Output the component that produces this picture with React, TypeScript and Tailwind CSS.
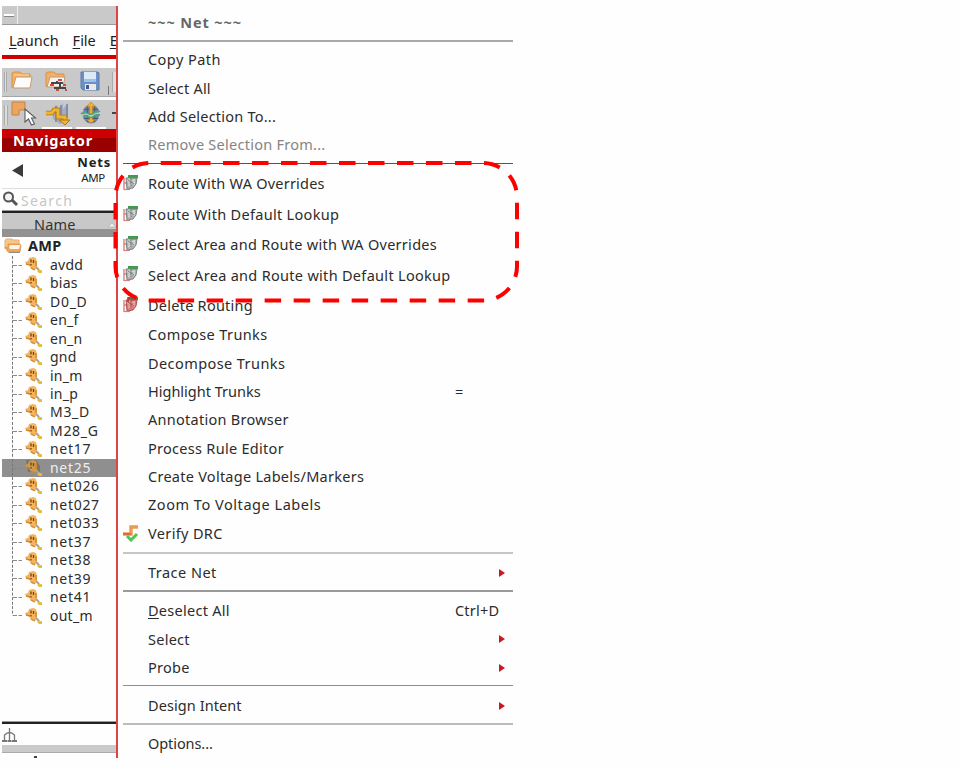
import React from "react";

function FolderIcon() {
  return (
    <svg width="22" height="19" viewBox="0 0 22 19" className="shrink-0">
      <path d="M1 17V2l2-1h6l2 2h8v4" fill="#f3b063" stroke="#d99048" strokeWidth="1" />
      <path d="M2 17L5 6l16 0-2 11z" fill="#fdfcfb" stroke="#c59a70" strokeWidth="1" />
      <path d="M3 4h15" stroke="#fbd9a8" />
    </svg>
  );
}

function TreeFolderIcon() {
  return (
    <svg width="18" height="17" viewBox="0 0 18 17" className="shrink-0">
      <path d="M1 12V3l2-1h5l1 1h6v5" fill="#f6c78a" stroke="#e8b078" />
      <path d="M4 15L1 10l3 1V7h12l1 2-1 6z" fill="#f3a654" stroke="#d89450" strokeWidth=".8" />
      <path d="M5 10l1-2h10l-1 4H6z" fill="#fff4e4" />
      <path d="M5 15.5h11" stroke="#8c8c8c" />
    </svg>
  );
}

function FolderNetIcon() {
  return (
    <svg width="24" height="22" viewBox="0 0 24 22" className="shrink-0">
      <path d="M1 16V2l2-1h6l2 2h8v4" fill="#f3b063" stroke="#d99048" />
      <path d="M2 16L5 6h15l-2 10z" fill="#f5f2ef" stroke="#c59a70" />
      <path d="M6 12h6v-2M12 12h6M15 12v5h6M9 17h6" stroke="#44474c" strokeWidth="2" fill="none" />
      <path d="M5 14h4M13 9h4M18 14h3M11 19h3M20 19h2" stroke="#cf4a45" strokeWidth="1.8" />
    </svg>
  );
}

function SaveIcon() {
  return (
    <svg width="20" height="20" viewBox="0 0 20 20" className="shrink-0">
      <path d="M1 1h17l1 1v17H3l-2-2z" fill="#6a90cb" stroke="#6478a0" />
      <path d="M4 1h12v9H4z" fill="#dce9f6" />
      <path d="M4 8h12v3H4z" fill="#a0c0e8" />
      <path d="M5 13h11v6H5z" fill="#e7e9ed" />
      <path d="M6 14h3v4H6z" fill="#42598a" />
    </svg>
  );
}

function PointerIcon() {
  return (
    <svg width="26" height="27" viewBox="0 0 26 27" className="shrink-0">
      <path d="M1 2h13v8H8v5H1z" fill="#eba55d" stroke="#c98243" />
      <path d="M14 9v13l3.500-3 3 6 3-1-3-6h4z" fill="#fff" stroke="#5c5c60" strokeWidth="1.1" />
    </svg>
  );
}

function RouteToolIcon() {
  return (
    <svg width="27" height="25" viewBox="0 0 27 25" className="shrink-0">
      <path d="M7 10l4-6 3 3 4-5v6l5-6v14l-8 7-7-5z" fill="#a3abc3" />
      <path d="M11 5v16M16 4v14M22 3v14" stroke="#7884a8" strokeWidth="1.500" />
      <path d="M1 12h6l2-3h4v7h7v3" fill="none" stroke="#a8771c" strokeWidth="4.600" />
      <path d="M1 12h6l2-3h4v7h7v3" fill="none" stroke="#f0b430" strokeWidth="3" />
      <path d="M14 19h11l-5 5z" fill="#f0b430" stroke="#a8771c" />
    </svg>
  );
}

function LayersIcon() {
  return (
    <svg width="22" height="26" viewBox="0 0 24 26" className="shrink-0">
      <ellipse cx="12" cy="14" rx="9" ry="10.500" fill="#7583a8" />
      <path d="M8 5v18M16 5v18M4 9h16M4 19h16" stroke="#46557c" />
      <path d="M12 1l5 5h-3.500v14h3.500l-5 4-5-4h3.500V6H7z" fill="#edb32d" stroke="#b58024" strokeWidth=".7" />
      <path d="M1 14c6-5 7 3 12 0s6-2 9-3M3 17c5-3 6 3 11 0s5-2 8-2" fill="none" stroke="#4ba879" strokeWidth="1.800" />
      <path d="M3 15.500c5-4 7 3 11 0s5-2 8-2.500" fill="none" stroke="#d4eadd" strokeWidth="1" />
    </svg>
  );
}

function KeyIcon({ active = false }: { active?: boolean }) {
  return (
    <svg width="18" height="18" viewBox="0 0 18 18" className="shrink-0">
      {active && <path d="M1 1h10l4 6v6H3z" fill="#787667" />}
      <path d="M0 6l3-1 1-3 4-1 3 1 1 4v5l-2 3-4-1-2-4-3-1z" fill={active ? "#cf9a4c" : "#f4b45c"} />
      <path d="M1 8l4 1M6 12l4 2M11 5v5" stroke="#d2842c" strokeWidth="1.300" />
      <path d="M6 3.500v3M6 8v1.500M8.500 4v3" stroke="#6d431c" strokeWidth="1.300" />
      <path d="M11 11l3 3" stroke="#a7a39c" strokeWidth="2" />
      <path d="M12 15l2-1.500 3 1v2.500h-3z" fill="#e3bd35" />
    </svg>
  );
}

function RoutingIcon({ remove = false }: { remove?: boolean }) {
  return (
    <svg width="17" height="17" viewBox="0 0 17 17" className="mt-[-2px] shrink-0">
      <path d="M1 4v12M1 9h4" stroke="#d48080" strokeWidth="1.400" />
      <path d="M5 1h10v3H5z" fill={remove ? "#487b52" : "#3f9c4c"} />
      <path d="M3 4h11l-1 6-3 4-6 1z" fill={remove ? "#d9807a" : "#aeb0af"} stroke={remove ? "#b05050" : "#7c8280"} />
      <path d="M6 4v7M11 5v6M4 7l8-1M5 12l7-4" stroke={remove ? "#eab0ac" : "#dcdfdd"} />
      <path d="M8 4v8M5 6l6 4" stroke={remove ? "#a85454" : "#7a847d"} />
      <path d="M1 15.500h6" stroke="#d88080" strokeWidth="1.200" />
      {remove && <path d="M5 1v5" stroke="#c52727" strokeWidth="1.500" />}
    </svg>
  );
}

function VerifyIcon() {
  return (
    <svg width="17" height="17" viewBox="0 0 17 17" className="shrink-0">
      <path d="M15 2H8v7H0" fill="none" stroke="#ea9b50" strokeWidth="3.400" />
      <path d="M0 9h8" stroke="#dc6c3c" strokeWidth="2" />
      <path d="M4 11l4 4 6-6" fill="none" stroke="#52c454" strokeWidth="3" />
    </svg>
  );
}

type Item = {
  label: string;
  tracking?: string;
  icon?: "route" | "delete" | "verify";
  shortcut?: string;
  arrow?: boolean;
  disabled?: boolean;
  accel?: boolean;
};

function MenuRow({ item, height }: { item: Item; height: string }) {
  return (
    <div className={`flex items-center pb-px ${height} ${item.disabled ? "text-[#858585]" : "text-[#2c2c2c]"}`}>
      <span className="flex w-[25px] shrink-0">
        {item.icon === "route" && <RoutingIcon />}
        {item.icon === "delete" && <RoutingIcon remove />}
        {item.icon === "verify" && <VerifyIcon />}
      </span>
      <span className={`grow whitespace-pre ${item.tracking ?? ""}`}>
        {item.accel ? (
          <>
            <span className="underline underline-offset-2">{item.label[0]}</span>
            {item.label.slice(1)}
          </>
        ) : (
          item.label
        )}
      </span>
      {item.shortcut && <span className="w-[58px] whitespace-nowrap tracking-[0.2px]">{item.shortcut}</span>}
      {item.arrow && (
        <svg width="7" height="8" viewBox="0 0 7 8" className="mr-2 mt-px">
          <path d="M1 0l6 4-6 4z" fill="#c9191e" />
        </svg>
      )}
    </div>
  );
}

const editItems: Item[] = [
  { label: "Copy Path", tracking: "tracking-[0.45px]" },
  { label: "Select All", tracking: "tracking-[0.2px]" },
  { label: "Add Selection To...", tracking: "tracking-[0.22px]" },
  { label: "Remove Selection From...", tracking: "tracking-[0.26px]", disabled: true },
];
const routeItems: Item[] = [
  { label: "Route With WA Overrides", tracking: "tracking-[0.22px]", icon: "route" },
  { label: "Route With Default Lookup", tracking: "tracking-[0.31px]", icon: "route" },
  { label: "Select Area and Route with WA Overrides", tracking: "tracking-[0.27px]", icon: "route" },
  { label: "Select Area and Route with Default Lookup", tracking: "tracking-[0.3px]", icon: "route" },
  { label: "Delete Routing", tracking: "tracking-[0.25px]", icon: "delete" },
];
const toolItems: Item[] = [
  { label: "Compose Trunks", tracking: "tracking-[0.4px]" },
  { label: "Decompose Trunks", tracking: "tracking-[0.42px]" },
  { label: "Highlight Trunks", shortcut: "=" },
  { label: "Annotation Browser", tracking: "tracking-[0.27px]" },
  { label: "Process Rule Editor", tracking: "tracking-[0.29px]" },
  { label: "Create Voltage Labels/Markers", tracking: "tracking-[0.26px]" },
  { label: "Zoom To Voltage Labels", tracking: "tracking-[0.54px]" },
];
const selectItems: Item[] = [
  { label: "Deselect All", tracking: "tracking-[0.27px]", shortcut: "Ctrl+D", accel: true },
  { label: "Select", tracking: "tracking-[0.25px]", arrow: true },
  { label: "Probe", tracking: "tracking-[0.25px]", arrow: true },
];
const nets = [
  "avdd", "bias", "D0_D", "en_f", "en_n", "gnd", "in_m", "in_p", "M3_D", "M28_G",
  "net17", "net25", "net026", "net027", "net033", "net37", "net38", "net39", "net41", "out_m",
];

function ContextMenu() {
  return (
    <div className="flex w-[395px] flex-col pl-[5px] text-[14.5px] leading-none">
      <div className="flex h-[33px] items-center pl-[25px] font-bold tracking-[0.9px] text-[#666]">~~~ Net ~~~</div>
      <div className="h-[7px] pt-[0.5px]"><div className="h-[2px] bg-[#a4abaa]" /></div>
      {editItems.map((i) => <MenuRow key={i.label} item={i} height="h-[28.3px]" />)}
      <div className="h-[9.8px] pt-[3.8px]"><div className="h-px bg-[#555]" /></div>
      {routeItems.map((i) => <MenuRow key={i.label} item={i} height="h-[30.4px]" />)}
      {toolItems.map((i) => <MenuRow key={i.label} item={i} height="h-[28.3px]" />)}
      <MenuRow item={{ label: "Verify DRC", tracking: "tracking-[0.35px]", icon: "verify" }} height="h-[29.9px]" />
      <div className="h-[10px] pt-[3px]"><div className="h-[2px] bg-[#c6c6c6]" /></div>
      <MenuRow item={{ label: "Trace Net", tracking: "tracking-[0.48px]", arrow: true }} height="h-[28px]" />
      <div className="h-[10px] pt-[3px]"><div className="h-[2px] bg-[#9a9a9a]" /></div>
      {selectItems.map((i) => <MenuRow key={i.label} item={i} height="h-[28.3px]" />)}
      <div className="h-[9.6px] pt-[3px]"><div className="h-[1.5px] bg-[#8e8e8e]" /></div>
      <MenuRow item={{ label: "Design Intent", tracking: "tracking-[0.08px]", arrow: true }} height="h-[28.3px]" />
      <div className="h-[9.7px] pt-[3px]"><div className="h-[2px] bg-[#bcbcbc]" /></div>
      <MenuRow item={{ label: "Options...", tracking: "tracking-[-0.08px]" }} height="h-[28.3px]" />
    </div>
  );
}

function NavigatorPanel() {
  return (
    <div className="flex h-[752px] w-[114px] shrink-0 flex-col overflow-hidden">
      <div className="flex h-[19px] shrink-0 border-b border-[#999] bg-[#c9c9c9]">
        <div className="flex w-4 items-center border-r border-[#eee] pl-[2px]">
          <div className="h-[3px] w-[10px] border-b border-[#888] bg-white" />
        </div>
      </div>
      <div className="flex h-[30px] shrink-0 items-center gap-[14px] whitespace-nowrap pl-[7px] pt-px text-[14.5px] text-[#222]">
        <span><u className="underline-offset-2">L</u>aunch</span>
        <span><u className="underline-offset-2">F</u>ile</span>
        <span><u className="underline-offset-2">E</u></span>
      </div>
      <div className="h-[4px] shrink-0 bg-[#cc0000]" />
      <div className="mt-[9px] flex h-[29px] shrink-0 items-center border-b border-[#a5a5a5] bg-[#c9c9c9] pl-[2px]">
        <div className="h-5 w-[4px] border-x border-[#aaa] bg-[#ddd]" />
        <div className="ml-[4px] mt-[-4px] flex items-center"><FolderIcon /></div>
        <div className="ml-[12px] mt-[-1px]"><FolderNetIcon /></div>
        <div className="ml-[11px] mt-[-3px]"><SaveIcon /></div>
        <div className="ml-[6px] mt-4 h-[9px] w-[3px] shrink-0 border-r border-[#777]" />
        <div className="ml-[3px] h-5 w-[4px] shrink-0 border-l border-[#aaa] bg-[#ddd]" />
      </div>
      <div className="mt-[3px] flex h-[29px] shrink-0 items-center bg-[#c9c9c9] pl-[2px]">
        <div className="h-5 w-[4px] shrink-0 border-x border-[#aaa] bg-[#ddd]" />
        <div className="ml-[3px] mt-[-2px]"><PointerIcon /></div>
        <div className="ml-[5px] h-[29px] w-[30px] border-b-2 border-white pl-[3px] pt-px"><RouteToolIcon /></div>
        <div className="ml-[4px] h-[29px] w-[30px] border-b-2 border-white pl-[4px]"><LayersIcon /></div>
        <div className="ml-auto mt-[-4px] h-[2px] w-1 shrink-0 bg-[#444]" />
      </div>
      <div className="flex h-[23px] shrink-0 items-center bg-linear-to-b from-[#cc0000] from-40% to-[#990000] to-40% pl-[11px] text-[14.5px] font-bold tracking-[0.8px] text-white">
        Navigator
      </div>
      <div className="flex h-[37px] shrink-0 items-center justify-between border-b border-[#ddd] pl-[10px]">
        <svg width="11" height="13" viewBox="0 0 11 13"><path d="M11 0v13L0 6.5z" fill="#3b3b3b" /></svg>
        <div className="flex flex-col items-end pr-[5px] leading-none text-[#222]">
          <span className="text-[13px] font-bold tracking-[0.8px]">Nets</span>
          <span className="mt-[3px] pr-[6px] text-[11.5px] tracking-[-0.3px]">AMP</span>
        </div>
      </div>
      <div className="flex h-[21px] shrink-0 items-center pt-[2px] text-[14px] tracking-[1.3px] text-[#c6c6c6]">
        <svg width="19" height="19" viewBox="0 0 19 19" className="mb-[3px] shrink-0">
          <circle cx="6.5" cy="7" r="4.5" fill="#f4f4f4" stroke="#555" strokeWidth="2" />
          <path d="M10 10l5 5" stroke="#555" strokeWidth="3" />
        </svg>
        Search
      </div>
      <div className="h-[3px] shrink-0 border-b-2 border-[#222] bg-[#999]" />
      <div className="flex h-[24px] shrink-0 items-center bg-linear-to-b from-[#c8c8c8] from-65% to-[#929292] to-65% pl-[32px] text-[14.5px] tracking-[0.2px] text-[#333]">
        Name
        <svg width="8" height="6" viewBox="0 0 8 6" className="ml-auto"><path d="M0 5l4-4 4 4z" fill="#eee" stroke="#aaa" strokeWidth=".6" /></svg>
      </div>
      <div className="flex h-[18.5px] shrink-0 items-center gap-[6px] pb-px pl-[2px] text-[14.5px] font-bold tracking-[0.3px] text-[#222]">
        <TreeFolderIcon />
        <span>AMP</span>
      </div>
      {nets.map((net) => (
        <div
          key={net}
          className={`flex h-[18.47px] shrink-0 items-center text-[14px] leading-none ${/\d/.test(net) ? "tracking-[0.7px]" : "tracking-[0.25px]"} ${net === "net25" ? "bg-[#8f8f8f] text-[#eee]" : "text-[#2c2c2c]"}`}
        >
          <svg width="23" height="18.47" viewBox="0 0 23 18.47" className="shrink-0">
            <path d={net === "out_m" ? "M10.5 0V9.5" : "M10.5 0V18.5"} stroke="#777" strokeDasharray="3 1.6" />
            <path d="M11 9.5h9" stroke="#888" strokeDasharray="4 1.5" />
          </svg>
          <KeyIcon active={net === "net25"} />
          <span className="pl-[7px]">{net}</span>
        </div>
      ))}
      <div className="mt-auto h-[3px] shrink-0 border-b-2 border-[#222] bg-[#999]" />
      <div className="h-[21px] shrink-0 pt-[4px]">
        <svg width="16" height="15" viewBox="0 0 16 15">
          <path d="M7.5 0v14M2.5 12V7q5-5 10 0v5" fill="none" stroke="#777" strokeWidth="1.300" />
          <path d="M0 13h5M5.5 13h4M10 13h5" stroke="#777" strokeWidth="2" />
        </svg>
      </div>
      <div className="h-[8px] shrink-0 border-b border-[#aaa] bg-[#cacaca]" />
      <div className="flex h-[5px] shrink-0 items-end pl-[32px]"><div className="h-[2px] w-[3px] bg-[#444]" /></div>
    </div>
  );
}

export default function App() {
  return (
    <div className="relative h-[769px] w-[960px] overflow-hidden bg-[#fefefe] font-['Noto_Sans','Open_Sans',sans-serif]">
      <div className="flex pl-[2px] pt-[6px]">
        <NavigatorPanel />
        <div className="w-[2px] shrink-0 bg-[#dc4545]" />
        <ContextMenu />
      </div>
      <svg width="960" height="769" viewBox="0 0 960 769" className="pointer-events-none absolute inset-0">
        <path
          d="M165 163H483A34 34 0 0 1 517 197V266.5A34 34 0 0 1 483 300.5H149.5A34 34 0 0 1 115.500 266.5V197A34 34 0 0 1 149.5 163H165"
          fill="none"
          stroke="#ff0000"
          strokeWidth="4"
          strokeDasharray="16.500 12.500"
        />
      </svg>
    </div>
  );
}
